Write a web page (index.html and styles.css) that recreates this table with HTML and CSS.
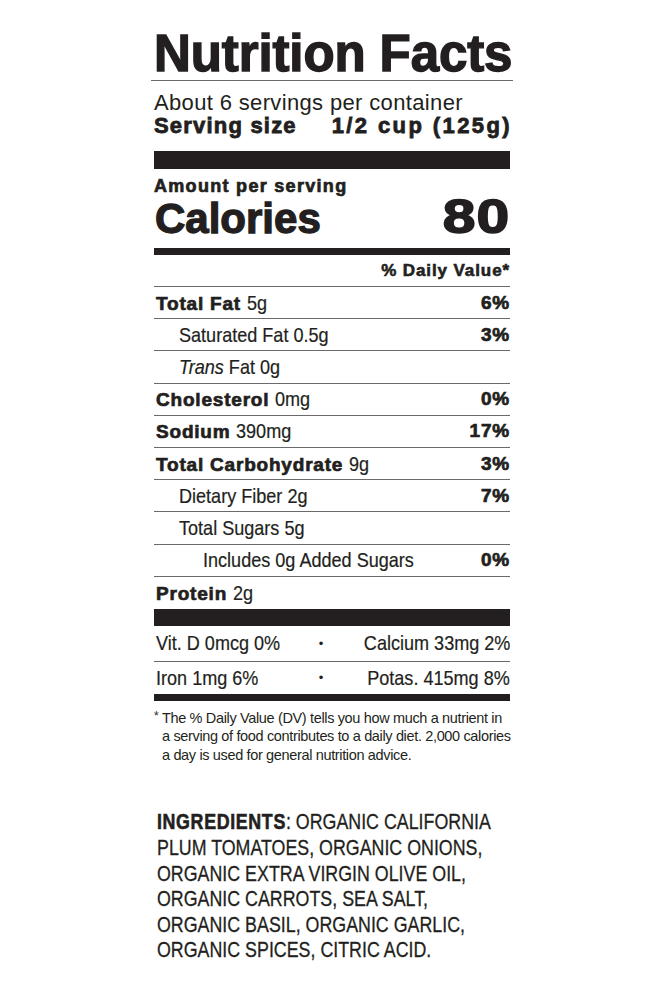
FILE: index.html
```html
<!DOCTYPE html>
<html lang="en">
<head>
<meta charset="utf-8">
<title>Nutrition Facts</title>
<link rel="stylesheet" href="styles.css">
</head>
<body>
<div class="label">
  <h1 class="title">Nutrition Facts</h1>
  <div class="servings">
    <div class="per-container">About 6 servings per container</div>
    <div class="serving-size"><span class="ss-left">Serving size</span><span class="ss-right">1/2 cup (125g)</span></div>
  </div>
  <div class="bar bar-thick"></div>
  <div class="amount">Amount per serving</div>
  <div class="calories"><span class="cal-label">Calories</span><span class="cal-value">80</span></div>
  <div class="bar bar-medium"></div>
  <div class="dv-head">% Daily Value*</div>
  <div class="row"><span class="name"><b>Total Fat</b> <span class="cond">5g</span></span><b>6%</b></div>
  <div class="row indent1"><span class="name"><span class="cond">Saturated Fat 0.5g</span></span><b>3%</b></div>
  <div class="row indent1"><span class="name"><span class="cond"><i>Trans</i> Fat 0g</span></span></div>
  <div class="row"><span class="name"><b>Cholesterol</b> <span class="cond">0mg</span></span><b>0%</b></div>
  <div class="row"><span class="name"><b>Sodium</b> <span class="cond">390mg</span></span><b>17%</b></div>
  <div class="row"><span class="name"><b>Total Carbohydrate</b> <span class="cond">9g</span></span><b>3%</b></div>
  <div class="row indent1"><span class="name"><span class="cond">Dietary Fiber 2g</span></span><b>7%</b></div>
  <div class="row indent1"><span class="name"><span class="cond">Total Sugars 5g</span></span></div>
  <div class="row indent2"><span class="name"><span class="cond">Includes 0g Added Sugars</span></span><b>0%</b></div>
  <div class="row last"><span class="name"><b>Protein</b> <span class="cond">2g</span></span></div>
  <div class="bar bar-thick2"></div>
  <div class="vit-row first"><span class="cond">Vit. D 0mcg 0%</span><span class="dot">•</span><span class="right"><span class="cond cond-r">Calcium 33mg 2%</span></span></div>
  <div class="vit-row"><span class="cond">Iron 1mg 6%</span><span class="dot">•</span><span class="right"><span class="cond cond-r">Potas. 415mg 8%</span></span></div>
  <div class="bar bar-medium"></div>
  <p class="footnote"><span class="star">*</span>The % Daily Value (DV) tells you how much a nutrient in<br>a serving of food contributes to a daily diet. 2,000 calories<br>a day is used for general nutrition advice.</p>
  <div class="ingredients-wrap">
    <p class="ingredients"><b>INGREDIENTS</b>: ORGANIC CALIFORNIA<br>PLUM TOMATOES, ORGANIC ONIONS,<br>ORGANIC EXTRA VIRGIN OLIVE OIL,<br>ORGANIC CARROTS, SEA SALT,<br>ORGANIC BASIL, ORGANIC GARLIC,<br>ORGANIC SPICES, CITRIC ACID.</p>
  </div>
</div>
</body>
</html>
```

FILE: styles.css
```css
html, body {
  margin: 0;
  padding: 0;
  background: #ffffff;
}

.label {
  width: 356px;
  margin-left: 154px;
  padding-top: 28px;
  color: #231f20;
  font-family: "Liberation Sans", Arial, sans-serif;
}

.title {
  margin: 0 -3px 0 -3px;
  padding-left: 3px;
  font-size: 51px;
  line-height: 52px;
  font-weight: 700;
  -webkit-text-stroke: 1.4px #231f20;
  letter-spacing: -0.1px;
  white-space: nowrap;
  border-bottom: 1px solid #6a6a6a;
}

.servings {
  padding-top: 10px;
}

.per-container {
  font-size: 22px;
  line-height: 23px;
  letter-spacing: 0.35px;
}

.serving-size {
  display: flex;
  justify-content: space-between;
  font-size: 22px;
  line-height: 23px;
  font-weight: 700;
  -webkit-text-stroke: 0.8px #231f20;
}

.ss-left {
  letter-spacing: 1.2px;
}

.ss-right {
  letter-spacing: 2.4px;
  margin-right: -2px;
}

.bar {
  background: #231f20;
}

.bar-thick {
  margin-top: 14px;
  height: 18px;
}

.bar-thick2 {
  height: 17px;
}

.bar-medium {
  height: 7px;
}

.amount {
  padding-top: 8px;
  font-size: 18px;
  line-height: 19px;
  font-weight: 700;
  -webkit-text-stroke: 0.7px #231f20;
  letter-spacing: 1.3px;
}

.calories {
  display: flex;
  justify-content: space-between;
  align-items: baseline;
  padding-bottom: 9px;
  font-weight: 700;
  line-height: 40px;
  -webkit-text-stroke: 1.3px #231f20;
}

.cal-label {
  font-size: 42px;
  letter-spacing: 0;
  margin-left: 1px;
}

.cal-value {
  display: inline-block;
  font-size: 49px;
  letter-spacing: 1px;
  transform: scaleX(1.2);
  transform-origin: right center;
  margin-right: -1px;
  -webkit-text-stroke: 1.6px #231f20;
}

.dv-head {
  height: 31px;
  border-bottom: 1px solid #6a6a6a;
  display: flex;
  align-items: center;
  justify-content: flex-end;
  font-size: 17px;
  font-weight: 700;
  -webkit-text-stroke: 0.6px #231f20;
  letter-spacing: 0.9px;
}

.row {
  display: flex;
  justify-content: space-between;
  align-items: center;
  height: 31.2px;
  border-bottom: 1px solid #6a6a6a;
  font-size: 21px;
  padding-left: 2px;
}

.row b {
  font-weight: 700;
  font-size: 19px;
  -webkit-text-stroke: 0.7px #231f20;
  letter-spacing: 0.8px;
}

.name {
  white-space: nowrap;
}

.cond {
  display: inline-block;
  transform: scaleX(0.86);
  transform-origin: left center;
  white-space: nowrap;
  -webkit-text-stroke: 0.2px #231f20;
}

.cond-r {
  transform-origin: right center;
}

.row i {
  font-style: italic;
}

.row.indent1 {
  padding-left: 25px;
}

.row.indent2 {
  padding-left: 49px;
}

.row.last {
  border-bottom: none;
  height: 32.2px;
}

.vit-row {
  display: grid;
  grid-template-columns: 150px 30px 1fr;
  align-items: center;
  height: 32px;
  font-size: 21px;
  padding-left: 2px;
}

.vit-row.first {
  height: 35px;
  border-bottom: 1px solid #6a6a6a;
}

.vit-row .dot {
  text-align: center;
  font-size: 13px;
}

.vit-row .right {
  text-align: right;
}

.footnote {
  margin: 8px 0 0 0;
  padding-left: 8px;
  text-indent: -8px;
  font-size: 14.5px;
  line-height: 18.5px;
  letter-spacing: -0.35px;
  white-space: nowrap;
}

.footnote .star {
  display: inline-block;
  text-indent: 0;
  width: 8px;
  font-size: 12px;
  vertical-align: top;
  line-height: 14px;
}

.ingredients-wrap {
  margin-top: 45px;
  padding-left: 3px;
}

.ingredients {
  margin: 0;
  width: 430px;
  font-size: 22px;
  line-height: 25.6px;
  white-space: nowrap;
  transform: scaleX(0.81);
  transform-origin: left top;
  -webkit-text-stroke: 0.3px #231f20;
}

.ingredients b {
  font-weight: 700;
  letter-spacing: 0.8px;
  -webkit-text-stroke: 0.6px #231f20;
}
```
